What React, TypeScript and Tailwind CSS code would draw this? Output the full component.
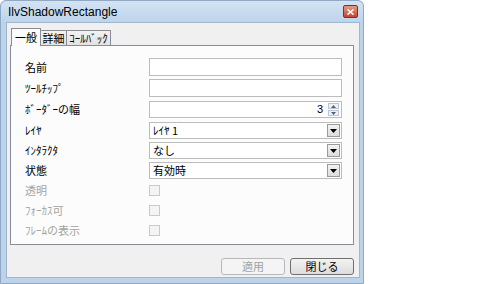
import React from 'react';

const jp = { fontFamily: '"Noto Sans CJK JP", "Liberation Sans", sans-serif' };

function Label({ text, disabled }: { text: string; disabled?: boolean }) {
  return (
    <div className={`w-[138px] pl-[14px] text-[11px] leading-none ${disabled ? 'text-[#a3a3a3]' : 'text-black'}`}>
      {text}
    </div>
  );
}

function TextBox({ h = 'h-[18px]' }: { h?: string }) {
  return <div className={`w-[193px] ${h} border border-[#bcbcbc] bg-white`} />;
}

function Combo({ value }: { value: string }) {
  return (
    <div className="w-[193px] h-[17px] border border-[#bcbcbc] bg-white flex items-center justify-between pl-[3px] pr-[1px]">
      <span className="text-[11px] leading-none text-black">{value}</span>
      <div className="w-[13px] h-[13px] border border-[#9a9a9a] bg-gradient-to-b from-[#f4f4f4] to-[#dcdcdc] flex items-center justify-center">
        <svg width="7" height="4" viewBox="0 0 7 4">
          <path d="M0 0h7L3.5 4z" fill="#000" />
        </svg>
      </div>
    </div>
  );
}

function Check() {
  return <div className="w-[11px] h-[11px] border border-[#c9c9c9] bg-[#f4f4f4]" />;
}

export default function App() {
  return (
    <div className="w-[492px] h-[284px] bg-white" style={jp}>
      <div className="w-[364px] h-[284px] border border-[#8fa9c4] rounded-t-[6px] bg-[#bcd3ea] flex flex-col">
        {/* title bar */}
        <div className="h-[21px] flex items-center justify-between pl-[7px] pr-[5px] bg-gradient-to-b from-[#d3e3f3] to-[#bdd4eb] rounded-t-[6px]">
          <span className="text-[12px] text-black" style={{ fontFamily: '"Liberation Sans", sans-serif' }}>
            IlvShadowRectangle
          </span>
          <div className="w-[15px] h-[13px] rounded-[2px] border border-[#7c3125] bg-gradient-to-b from-[#e29a86] to-[#c5442e] flex items-center justify-center">
            <svg width="7" height="6" viewBox="0 0 7 6">
              <path d="M0.5 0.5l6 5M6.5 0.5l-6 5" stroke="#fff" strokeWidth="1.6" />
            </svg>
          </div>
        </div>

        {/* client area */}
        <div className="flex-1 ml-[5px] mr-[3px] mb-[5px] border border-[#9fb6cf] bg-[#f0f0f0] flex flex-col pl-[3px] pr-[5px] pt-[4px]">
          {/* tabs */}
          <div className="flex items-end h-[18px] pl-[1px] text-[11px] leading-none">
            <div className="relative z-10 h-[18px] w-[30px] border border-b-0 border-[#898c95] bg-[#fcfcfc] flex items-center justify-center -mb-[1px]">
              一般
            </div>
            <div className="h-[15px] w-[26px] border border-l-0 border-b-0 border-[#898c95] bg-gradient-to-b from-[#f2f2f2] to-[#e3e3e3] flex items-center justify-center">
              詳細
            </div>
            <div className="h-[15px] w-[44px] border border-l-0 border-b-0 border-[#898c95] bg-gradient-to-b from-[#f2f2f2] to-[#e3e3e3] flex items-center justify-center">
              ｺｰﾙﾊﾞｯｸ
            </div>
          </div>

          {/* panel */}
          <div className="h-[200px] border border-[#898c95] bg-[#fcfcfc] flex flex-col pt-[12px]">
            <div className="flex items-center h-[18px]">
              <Label text="名前" />
              <TextBox />
            </div>
            <div className="flex items-center h-[18px] mt-[3px]">
              <Label text="ﾂｰﾙﾁｯﾌﾟ" />
              <TextBox />
            </div>
            <div className="flex items-center h-[17px] mt-[4px]">
              <Label text="ﾎﾞｰﾀﾞｰの幅" />
              <div className="w-[193px] h-[17px] border border-[#bcbcbc] bg-white flex items-center justify-end pr-[2px]">
                <span className="text-[11px] leading-none mr-[5px]" style={{ fontFamily: '"Liberation Sans", sans-serif' }}>
                  3
                </span>
                <div className="w-[11px] h-[13px] flex flex-col gap-[1px]">
                  <div className="flex-1 border border-[#b9c5d3] bg-[#eef2f7] flex items-center justify-center">
                    <svg width="5" height="3" viewBox="0 0 5 3">
                      <path d="M0 3h5L2.5 0z" fill="#4d6185" />
                    </svg>
                  </div>
                  <div className="flex-1 border border-[#b9c5d3] bg-[#eef2f7] flex items-center justify-center">
                    <svg width="5" height="3" viewBox="0 0 5 3">
                      <path d="M0 0h5L2.5 3z" fill="#4d6185" />
                    </svg>
                  </div>
                </div>
              </div>
            </div>
            <div className="flex items-center h-[17px] mt-[4px]">
              <Label text="ﾚｲﾔ" />
              <Combo value="ﾚｲﾔ 1" />
            </div>
            <div className="flex items-center h-[17px] mt-[3px]">
              <Label text="ｲﾝﾀﾗｸﾀ" />
              <Combo value="なし" />
            </div>
            <div className="flex items-center h-[17px] mt-[3px]">
              <Label text="状態" />
              <Combo value="有効時" />
            </div>
            <div className="flex items-center h-[20px] mt-[1px]">
              <Label text="透明" disabled />
              <Check />
            </div>
            <div className="flex items-center h-[20px]">
              <Label text="ﾌｫｰｶｽ可" disabled />
              <Check />
            </div>
            <div className="flex items-center h-[20px]">
              <Label text="ﾌﾚｰﾑの表示" disabled />
              <Check />
            </div>
          </div>

          {/* buttons */}
          <div className="flex justify-end gap-[5px] mt-[13px] text-[11px] leading-none">
            <div className="w-[64px] h-[17px] rounded-[3px] border border-[#b5b9bd] bg-[#f4f4f4] text-[#a3a3a3] flex items-center justify-center">
              適用
            </div>
            <div className="w-[64px] h-[17px] rounded-[3px] border border-[#707070] bg-gradient-to-b from-[#f3f3f3] to-[#dcdcdc] text-black flex items-center justify-center">
              閉じる
            </div>
          </div>
        </div>
      </div>
    </div>
  );
}
